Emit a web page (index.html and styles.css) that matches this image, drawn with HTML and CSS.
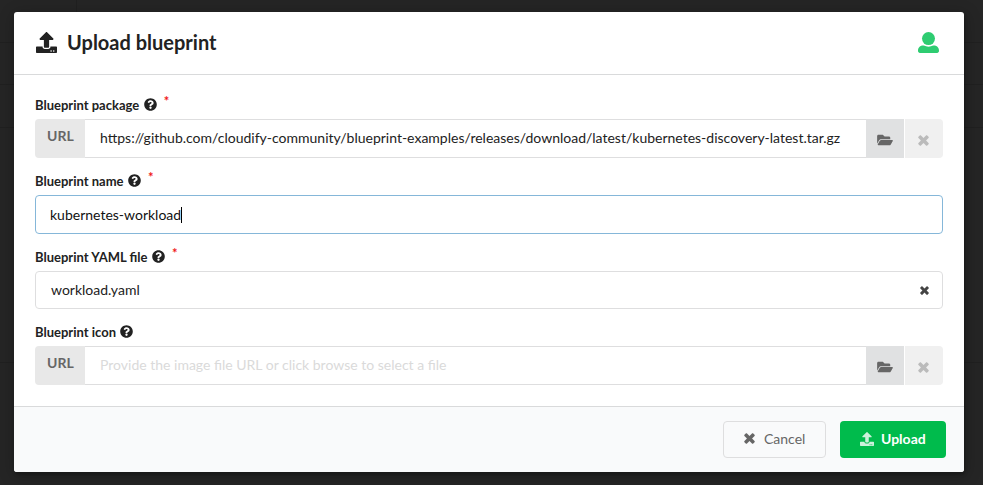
FILE: index.html
```html
<!DOCTYPE html>
<html lang="en">
<head>
<meta charset="utf-8">
<title>Upload blueprint</title>
<link rel="stylesheet" href="styles.css">
</head>
<body>
<svg class="defs" width="0" height="0" aria-hidden="true">
  <symbol id="upload" viewBox="0 0 512 512"><path d="M296 384h-80c-13.3 0-24-10.7-24-24V192h-87.7c-17.8 0-26.7-21.5-14.1-34.1L242.3 5.7c7.5-7.5 19.8-7.5 27.3 0l152.2 152.2c12.6 12.6 3.7 34.1-14.1 34.1H320v168c0 13.3-10.7 24-24 24zm216-8v112c0 13.3-10.7 24-24 24H24c-13.3 0-24-10.7-24-24V376c0-13.3 10.7-24 24-24h136v8c0 30.9 25.1 56 56 56h80c30.9 0 56-25.1 56-56v-8h136c13.3 0 24 10.7 24 24zm-124 88c0-11-9-20-20-20s-20 9-20 20 9 20 20 20 20-9 20-20zm64 0c0-11-9-20-20-20s-20 9-20 20 9 20 20 20 20-9 20-20z"/></symbol>
  <symbol id="user" viewBox="0 0 512 512"><circle cx="256" cy="160" r="158"/><path d="M120 332h22c66 36 162 36 228 0h22c70 0 120 52 120 124v10c0 26-20 46-46 46H46c-26 0-46-20-46-46v-10c0-72 50-124 120-124z"/></symbol>
  <symbol id="help" viewBox="0 0 512 512"><path d="M504 256c0 136.997-111.043 248-248 248S8 392.997 8 256C8 119.083 119.043 8 256 8s248 111.083 248 248zM262.655 90c-54.497 0-89.255 22.957-116.549 63.758-3.536 5.286-2.353 12.415 2.715 16.258l34.699 26.31c5.205 3.947 12.621 3.008 16.665-2.122 17.864-22.658 30.113-35.797 57.303-35.797 20.429 0 45.698 13.148 45.698 32.958 0 14.976-12.363 22.667-32.534 33.976C247.128 238.528 216 254.941 216 296v4c0 6.627 5.373 12 12 12h56c6.627 0 12-5.373 12-12v-1.333c0-28.462 83.186-29.647 83.186-106.667 0-58.002-60.165-102-116.531-102zM256 338c-25.365 0-46 20.635-46 46 0 25.364 20.635 46 46 46s46-20.636 46-46c0-25.364-20.635-46-46-46z"/></symbol>
  <symbol id="folder" viewBox="0 0 576 512"><path d="M572.694 292.093L500.27 416.248A63.997 63.997 0 0 1 444.989 448H45.025c-18.523 0-30.064-20.093-20.731-36.093l72.424-124.155A64 64 0 0 1 152 256h399.964c18.523 0 30.064 20.093 20.73 36.093zM152 224h328v-48c0-26.51-21.49-48-48-48H272l-64-64H48C21.49 64 0 85.49 0 112v278.046l69.077-118.418C86.214 242.25 117.989 224 152 224z"/></symbol>
  <symbol id="close" viewBox="0 0 384 384"><path d="M281 192l87-87c14-14 14-30 0-44l-45-45c-14-14-30-14-44 0l-87 87-87-87c-14-14-30-14-44 0L16 61c-14 14-14 30 0 44l87 87-87 87c-14 14-14 30 0 44l45 45c14 14 30 14 44 0l87-87 87 87c14 14 30 14 44 0l45-45c14-14 14-30 0-44z"/></symbol>
</svg>
<main class="modal">
  <header class="header">
    <svg class="header-icon"><use href="#upload"/></svg>
    <h1>Upload blueprint</h1>
    <svg class="user-icon"><use href="#user"/></svg>
  </header>
  <form class="content">
    <div class="field">
      <label>Blueprint package <svg class="help"><use href="#help"/></svg><span class="required">*</span></label>
      <div class="input-row">
        <span class="url">URL</span>
        <div class="input">https://github.com/cloudify-community/blueprint-examples/releases/download/latest/kubernetes-discovery-latest.tar.gz</div>
        <span class="action"><svg class="folder"><use href="#folder"/></svg></span>
        <span class="action disabled"><svg class="close"><use href="#close"/></svg></span>
      </div>
    </div>
    <div class="field">
      <label>Blueprint name <svg class="help"><use href="#help"/></svg><span class="required">*</span></label>
      <div class="text-box focused">kubernetes-workload<span class="caret"></span></div>
    </div>
    <div class="field yaml">
      <label>Blueprint YAML file <svg class="help"><use href="#help"/></svg><span class="required">*</span></label>
      <div class="text-box dropdown">workload.yaml<svg class="clear"><use href="#close"/></svg></div>
    </div>
    <div class="field">
      <label>Blueprint icon <svg class="help"><use href="#help"/></svg></label>
      <div class="input-row">
        <span class="url">URL</span>
        <div class="input placeholder">Provide the image file URL or click browse to select a file</div>
        <span class="action"><svg class="folder"><use href="#folder"/></svg></span>
        <span class="action disabled"><svg class="close"><use href="#close"/></svg></span>
      </div>
    </div>
  </form>
  <footer class="footer">
    <div class="button cancel"><svg class="close"><use href="#close"/></svg>Cancel</div>
    <div class="button upload"><svg class="upload-icon"><use href="#upload"/></svg>Upload</div>
  </footer>
</main>
</body>
</html>
```
FILE: styles.css
```css
* { box-sizing: border-box; }
body {
  margin: 0;
  height: 485px;
  padding: 12px 19px 13px 14px;
  background:
    linear-gradient(#202020, #202020) 0 42px / 100% 1px no-repeat,
    linear-gradient(#202020, #202020) 0 84px / 100% 1px no-repeat,
    linear-gradient(#202020, #202020) 0 127px / 100% 1px no-repeat,
    linear-gradient(#202020, #202020) 0 362px / 100% 1px no-repeat,
    linear-gradient(#202020, #202020) 76px 0 / 1px 12px no-repeat,
    #252525;
  font: 14px/20px Lato, sans-serif;
  color: #222;
  overflow: hidden;
}
.defs { position: absolute; }
svg { fill: currentColor; flex: none; }
.modal {
  height: 460px;
  display: flex;
  flex-direction: column;
  background: #fff;
  border-radius: 3px;
  box-shadow: 1px 3px 3px rgba(0,0,0,.2), 1px 3px 15px 2px rgba(0,0,0,.2);
  overflow: hidden;
}
.header {
  height: 63px;
  display: flex;
  align-items: center;
  padding: 0 25px 2px 22px;
  border-bottom: 1px solid #d9dadb;
}
.header-icon { width: 21px; height: 21px; }
h1 { margin: 0 auto 0 10px; font-size: 20px; line-height: 26px; font-weight: 700; }
.user-icon { width: 21px; height: 21px; color: #2ecc71; }
.content { height: 331px; padding: 19px 21px 0; }
.field { height: 76px; }
.field.yaml { height: 75px; }
label { display: flex; height: 25px; align-items: center; padding-bottom: 4px; font-size: 13px; font-weight: 700; }
.help { width: 13px; height: 13px; margin-left: 4.5px; }
.required { margin: -8px 0 0 7px; color: #f01818; }
.input-row { display: flex; height: 39px; }
.url {
  width: 50px;
  padding: 7px 0 0 12px;
  background: #e8e8e8;
  border-radius: 4px 0 0 4px;
  color: #666;
  font-weight: 700;
}
.input {
  flex: 1;
  padding: 8px 0 8px 15px;
  border: solid #dededf;
  border-width: 1px 0;
  white-space: nowrap;
}
.placeholder { color: #dadada; }
.action {
  width: 38px;
  display: flex;
  align-items: center;
  justify-content: center;
  padding-top: 3px;
  background: #e0e1e2;
  color: #666;
}
.action.disabled { width: 38px; margin-left: 1px; padding-right: 1px; background: #f0f0f0; color: #bbb; border-radius: 0 4px 4px 0; }
.folder { width: 16px; height: 14px; }
.close { width: 11px; height: 11px; }
.text-box {
  height: 39px;
  display: flex;
  align-items: center;
  padding: 0 14px;
  border: 1px solid #dededf;
  border-radius: 4px;
}
.focused { border-color: #85b7d9; color: #111; }
.caret { width: 1px; height: 16px; background: #000; }
.dropdown { height: 38px; padding: 0 13px 0 15px; }
.clear { width: 9px; height: 9px; margin-left: auto; color: #444; }
.footer {
  height: 66px;
  display: flex;
  justify-content: flex-end;
  gap: 14px;
  padding: 14px 18px;
  background: #f9fafb;
  border-top: 1px solid #d9dadb;
}
.button { height: 37px; display: flex; align-items: center; padding-bottom: 2px; border-radius: 4px; }
.cancel { width: 103px; padding-left: 20px; border: 1px solid #dededf; color: #666; gap: 9px; }
.upload { width: 106px; padding-left: 20px; background: #00bb4c; color: #fff; font-weight: 700; gap: 7px; }
.upload-icon { width: 14px; height: 14px; opacity: .8; }
```
